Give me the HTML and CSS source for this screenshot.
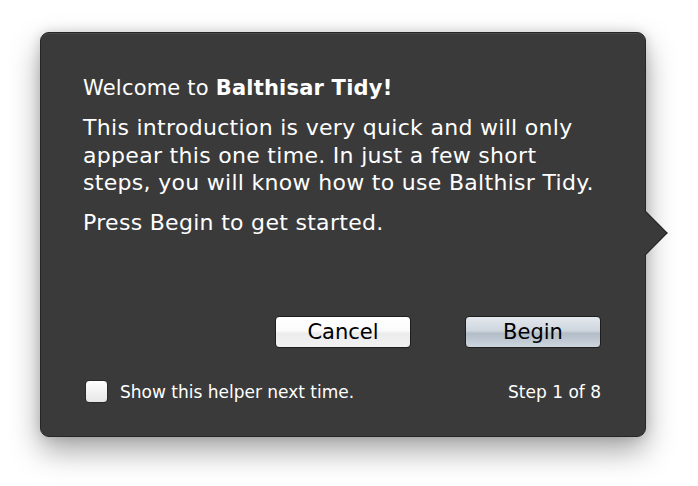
FILE: index.html
```html
<!DOCTYPE html>
<html>
<head>
<meta charset="utf-8">
<link rel="stylesheet" href="styles.css">
</head>
<body>
<div class="panel">
  <span class="arrow"></span>
  <div class="content">
    <h1 class="title">Welcome to <b>Balthisar Tidy!</b></h1>
    <p class="text">This introduction is very quick and will only<br>appear this one time. In just a few short<br>steps, you will know how to use Balthisr Tidy.</p>
    <p class="text text-last">Press Begin to get started.</p>
  </div>
  <div class="buttons">
    <button class="btn btn-cancel">Cancel</button>
    <button class="btn btn-begin">Begin</button>
  </div>
  <div class="footer">
    <label class="check"><span class="box"></span>Show this helper next time.</label>
    <span class="step">Step 1 of 8</span>
  </div>
</div>
</body>
</html>
```

FILE: styles.css
```css
html, body {
  margin: 0;
  padding: 0;
  background: #ffffff;
}
body {
  font-family: "DejaVu Sans", "Lucida Grande", sans-serif;
  width: 698px;
  height: 486px;
  overflow: hidden;
}
.panel {
  position: relative;
  margin: 32px 0 0 40px;
  width: 606px;
  height: 405px;
  box-sizing: border-box;
  background: #3a3a3a;
  border: 1px solid #262626;
  border-radius: 9px;
  box-shadow: inset 0 1px 0 #4a4a4a, 0 14px 30px rgba(0,0,0,0.35), 0 0 12px rgba(0,0,0,0.15);
  display: flex;
  flex-direction: column;
  padding: 0 44px 0 42px;
  color: #ffffff;
}
.arrow {
  position: absolute;
  right: -16px;
  top: 184px;
  width: 32px;
  height: 32px;
  background: #3a3a3a;
  border-top: 1px solid #262626;
  border-right: 1px solid #262626;
  transform: rotate(45deg);
  box-sizing: border-box;
}
.content {
  padding-top: 41px;
  flex: 1;
}
.title {
  margin: 0 0 12px 0;
  font-size: 21px;
  font-weight: normal;
  line-height: 28px;
  letter-spacing: 0.2px;
  white-space: nowrap;
}
.title b {
  font-weight: bold;
}
.text {
  margin: 0 0 9px 0;
  font-size: 22px;
  letter-spacing: 0.3px;
  line-height: 27.5px;
  white-space: nowrap;
}
.text-last {
  margin-top: 12px;
}
.buttons {
  display: flex;
  justify-content: flex-end;
  gap: 54px;
  margin-bottom: 32px;
}
.btn {
  width: 136px;
  height: 32px;
  border-radius: 4px;
  border: 1px solid #1e1e1e;
  font-family: "DejaVu Sans", sans-serif;
  font-size: 21px;
  color: #000;
  padding: 0;
  line-height: 30px;
}
.btn-cancel {
  background: linear-gradient(#ffffff 0%, #fbfbfb 45%, #ececec 55%, #f2f2f2 100%);
}
.btn-begin {
  background: linear-gradient(#e4e8ee 0%, #cfd6de 45%, #b3bdc8 55%, #cdd5dd 100%);
}
.footer {
  display: flex;
  justify-content: space-between;
  align-items: center;
  padding-bottom: 33px;
}
.check {
  display: flex;
  align-items: center;
  gap: 12px;
  font-size: 17px;
  padding-left: 2px;
}
.box {
  width: 23px;
  height: 23px;
  box-sizing: border-box;
  border-radius: 4px;
  border: 1px solid #2a2a2a;
  background: linear-gradient(#ffffff, #e6e6e6);
}
.step {
  font-size: 17px;
}
```
